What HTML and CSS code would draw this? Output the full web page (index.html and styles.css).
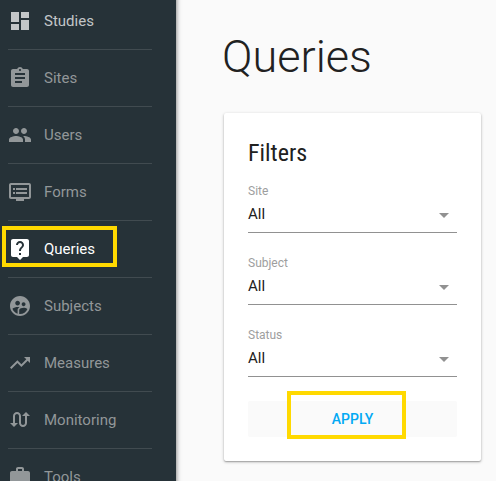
FILE: index.html
```html
<!DOCTYPE html>
<html lang="en">
<head>
<meta charset="utf-8">
<title>Queries</title>
<link rel="stylesheet" href="styles.css">
</head>
<body>
<div class="app">
  <nav class="sidebar">
    <a class="item bright"><svg class="icon" viewBox="0 0 24 24"><path d="M3 13h8V3H3v10zm0 8h8v-6H3v6zm10 0h8V11h-8v10zm0-18v6h8V3h-8z"/></svg><span>Studies</span></a>
    <a class="item"><svg class="icon" viewBox="0 0 24 24"><path d="M19 3h-4.180C14.400 1.840 13.300 1 12 1c-1.300 0-2.400.84-2.820 2H5c-1.100 0-2 .9-2 2v14c0 1.100.9 2 2 2h14c1.100 0 2-.9 2-2V5c0-1.100-.9-2-2-2zm-7 0c.55 0 1 .45 1 1s-.45 1-1 1-1-.45-1-1 .45-1 1-1zm2 14H7v-2h7v2zm3-4H7v-2h10v2zm0-4H7V7h10v2z"/></svg><span>Sites</span></a>
    <a class="item"><svg class="icon" viewBox="0 0 24 24"><path d="M16 11c1.660 0 2.990-1.340 2.990-3S17.660 5 16 5c-1.660 0-3 1.340-3 3s1.340 3 3 3zm-8 0c1.660 0 2.990-1.340 2.990-3S9.660 5 8 5C6.340 5 5 6.340 5 8s1.340 3 3 3zm0 2c-2.330 0-7 1.170-7 3.500V19h14v-2.500c0-2.330-4.670-3.500-7-3.500zm8 0c-.29 0-.62.020-.97.050 1.160.84 1.970 1.970 1.970 3.450V19h6v-2.500c0-2.330-4.670-3.500-7-3.500z"/></svg><span>Users</span></a>
    <a class="item"><svg class="icon" viewBox="0 0 24 24"><path d="M21 3H3c-1.100 0-2 .9-2 2v12c0 1.100.9 2 2 2h5v2h8v-2h5c1.100 0 1.990-.9 1.990-2L23 5c0-1.100-.9-2-2-2zm0 14H3V5h18v12zm-2-9H8v2h11V8zm0 4H8v2h11v-2zM7 8H5v2h2V8zm0 4H5v2h2v-2z"/></svg><span>Forms</span></a>
    <a class="item active"><svg class="icon" viewBox="0 0 24 24"><path d="M19 2H5c-1.110 0-2 .9-2 2v14c0 1.100.89 2 2 2h4l3 3 3-3h4c1.100 0 2-.9 2-2V4c0-1.100-.9-2-2-2zm-6 16h-2v-2h2v2zm2.070-7.750l-.9.920C13.450 11.900 13 12.500 13 14h-2v-.5c0-1.100.45-2.100 1.170-2.830l1.240-1.260c.37-.36.59-.86.59-1.410 0-1.100-.9-2-2-2s-2 .9-2 2H8c0-2.210 1.790-4 4-4s4 1.790 4 4c0 .88-.36 1.680-.93 2.250z"/></svg><span>Queries</span><i class="mark mark-nav"></i></a>
    <a class="item"><svg class="icon" viewBox="0 0 24 24"><path d="M11.990 2c-5.520 0-10 4.480-10 10s4.480 10 10 10 10-4.480 10-10-4.480-10-10-10zm3.610 6.340c1.070 0 1.930.86 1.930 1.930 0 1.070-.86 1.930-1.930 1.930-1.070 0-1.930-.86-1.930-1.930-.01-1.070.86-1.930 1.930-1.930zm-6-1.580c1.300 0 2.360 1.060 2.360 2.360 0 1.300-1.060 2.360-2.360 2.360s-2.360-1.060-2.360-2.360c0-1.310 1.050-2.360 2.360-2.360zm0 9.130v3.750c-2.400-.75-4.300-2.600-5.140-4.960 1.050-1.120 3.670-1.690 5.140-1.690.53 0 1.200.08 1.900.22-1.640.87-1.900 2.020-1.900 2.680zM11.990 20c-.27 0-.53-.01-.79-.04v-4.070c0-1.420 2.940-2.130 4.400-2.130 1.070 0 2.920.39 3.840 1.150-1.170 2.970-4.060 5.090-7.450 5.090z"/></svg><span>Subjects</span></a>
    <a class="item"><svg class="icon" viewBox="0 0 24 24"><path d="M16 6l2.290 2.290-4.880 4.880-4-4L2 16.590 3.410 18l6-6 4 4 6.300-6.290L22 12V6z"/></svg><span>Measures</span></a>
    <a class="item"><svg class="icon" viewBox="0 0 24 24"><path d="M18 4l-4 4h3v7c0 1.100-.9 2-2 2s-2-.9-2-2V8c0-2.210-1.790-4-4-4S5 5.790 5 8v7H2l4 4 4-4H7V8c0-1.100.9-2 2-2s2 .9 2 2v7c0 2.210 1.790 4 4 4s4-1.790 4-4V8h3l-4-4z"/></svg><span>Monitoring</span></a>
    <a class="item"><svg class="icon" viewBox="0 0 24 24"><path d="M20 6h-4V4c0-1.110-.89-2-2-2h-4c-1.110 0-2 .89-2 2v2H4c-1.110 0-1.990.89-1.990 2L2 19c0 1.110.89 2 2 2h16c1.110 0 2-.89 2-2V8c0-1.110-.89-2-2-2zm-6 0h-4V4h4v2z"/></svg><span>Tools</span></a>
  </nav>
  <main class="main">
    <h1 class="title">Queries</h1>
    <section class="card">
      <h2 class="heading">Filters</h2>
      <div class="field"><label class="label">Site</label><div class="select"><span>All</span><i class="arrow"></i></div></div>
      <div class="field"><label class="label">Subject</label><div class="select"><span>All</span><i class="arrow"></i></div></div>
      <div class="field"><label class="label">Status</label><div class="select"><span>All</span><i class="arrow"></i></div></div>
      <button class="apply">APPLY<i class="mark mark-apply"></i></button>
    </section>
  </main>
</div>
</body>
</html>
```
FILE: styles.css
```css
* { box-sizing: border-box; }
body { margin: 0; overflow: hidden; background: #fafafa; color: #212121; font-family: Roboto, sans-serif; }
.app { display: flex; height: 481px; overflow: hidden; }
.sidebar { flex: none; width: 176px; height: 513px; margin-top: -7px; padding: 0 24px 0 8px; background: #263238; box-shadow: 0 0 5px rgba(0,0,0,.6); }
.item { position: relative; display: flex; align-items: center; height: 57px; border-bottom: 1px solid #414b50; color: #929799; font-size: 15px; }
.bright { color: #c3c6c8; }
.active { color: #fff; }
.icon { width: 24px; height: 24px; margin-right: 12px; fill: currentColor; }
.mark { position: absolute; border: 4px solid #ffd900; }
.mark-nav { left: -6px; top: 5px; width: 115px; height: 41px; }
.main { flex: none; width: 305px; padding: 30px 0 0 48px; }
.title { margin: 0 0 0 -2px; height: 83px; line-height: 53px; font-size: 45px; font-weight: 300; }
.card { width: 257px; height: 348px; padding: 24px; border-radius: 2px; background: #fff; box-shadow: 0 1px 3px rgba(0,0,0,.3), 0 1px 1px rgba(0,0,0,.16); }
.heading { margin: 0 0 16px; height: 32px; font: 400 24px/32px "Roboto Condensed", Roboto, sans-serif; font-stretch: 75%; }
.field { height: 72px; }
.label { display: block; height: 16px; line-height: 12px; font-size: 12px; color: #9e9e9e; }
.select { display: flex; align-items: flex-start; justify-content: space-between; height: 32px; padding: 3px 8px 0 0; border-bottom: 1px solid #919191; font-size: 15px; line-height: 20px; }
.arrow { margin-top: 9px; border: 5px solid transparent; border-top-color: #919191; border-bottom: 0; }
.apply { position: relative; display: block; width: 209px; height: 36px; padding: 0; border: 0; border-radius: 2px; background: #fafafa; color: #03a9f4; font: 500 14px/36px Roboto, sans-serif; }
.mark-apply { left: 39px; top: -10px; width: 119px; height: 48px; }
```
